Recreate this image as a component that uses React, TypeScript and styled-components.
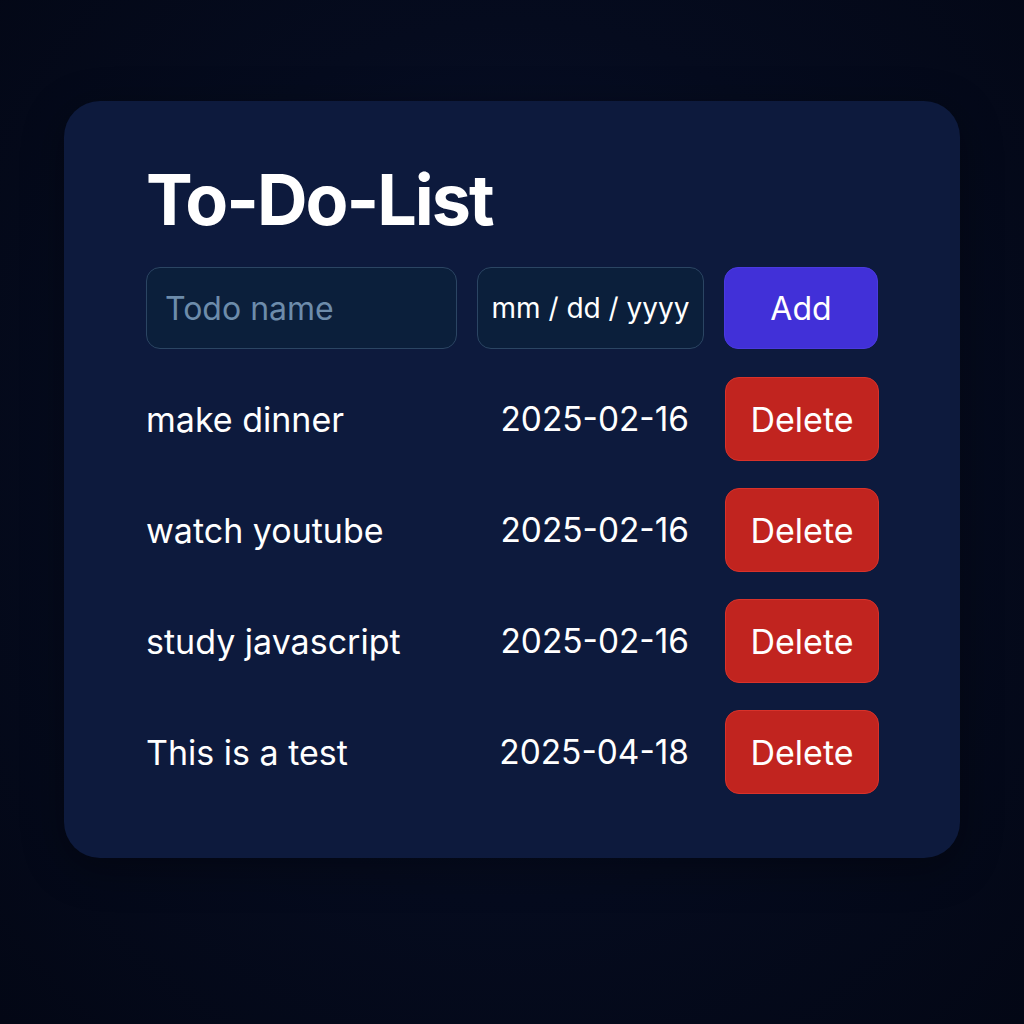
import React from "react";
import styled, { createGlobalStyle } from "styled-components";

const Global = createGlobalStyle`
  html, body { margin: 0; padding: 0; }
  body {
    background: #040919;
    font-family: Inter, "Noto Sans", "Liberation Sans", sans-serif;
    color: #ffffff;
  }
`;

const Page = styled.div`
  width: 1024px;
  height: 1024px;
  box-sizing: border-box;
  padding-top: 101px;
  padding-left: 64px;
  background: radial-gradient(ellipse at 50% 45%, #0a1330 0%, #050b1e 55%, #030715 100%);
`;

const Card = styled.div`
  width: 896px;
  height: 757px;
  box-sizing: border-box;
  background: #0d1a3d;
  border-radius: 36px;
  padding: 64px 81px 0 82px;
  box-shadow: 0 10px 40px rgba(0, 0, 0, 0.35);
`;

const Title = styled.h1`
  margin: 0 0 32px 0;
  font-size: 70px;
  font-weight: 700;
  letter-spacing: -2px;
  line-height: 70px;
  height: 70px;
  color: #ffffff;
`;

const InputRow = styled.div`
  display: grid;
  grid-template-columns: 311px 227px 154px;
  column-gap: 20px;
  height: 82px;
`;

const Field = styled.div<{ $center?: boolean }>`
  box-sizing: border-box;
  height: 82px;
  border: 1.5px solid #2b4563;
  border-radius: 14px;
  background: #0b1f3b;
  display: flex;
  align-items: center;
  justify-content: ${(p) => (p.$center ? "center" : "flex-start")};
  padding: 0 ${(p) => (p.$center ? "8px" : "18px")};
  font-size: ${(p) => (p.$center ? "28px" : "32px")};
  white-space: nowrap;
  color: ${(p) => (p.$center ? "#ffffff" : "#6d8cab")};
`;

const Button = styled.button<{ $variant: "add" | "delete" }>`
  box-sizing: border-box;
  height: ${(p) => (p.$variant === "add" ? "82px" : "84px")};
  width: 154px;
  border-radius: 14px;
  border: 1.5px solid ${(p) => (p.$variant === "add" ? "#4a3ae0" : "#d8322a")};
  background: ${(p) => (p.$variant === "add" ? "#4130d8" : "#c1241f")};
  color: #ffffff;
  font-family: inherit;
  font-size: ${(p) => (p.$variant === "add" ? "32px" : "34px")};
  font-weight: 400;
  padding: 0;
`;

const List = styled.div`
  margin-top: 28px;
  display: flex;
  flex-direction: column;
  gap: 27px;
`;

const Row = styled.div`
  display: grid;
  grid-template-columns: 1fr auto 154px;
  column-gap: 36px;
  align-items: center;
  height: 84px;
`;

const Name = styled.span`
  font-size: 34px;
  color: #ffffff;
`;

const DateText = styled.span`
  font-size: 33.4px;
  color: #ffffff;
`;

const todos = [
  { name: "make dinner", date: "2025-02-16" },
  { name: "watch youtube", date: "2025-02-16" },
  { name: "study javascript", date: "2025-02-16" },
  { name: "This is a test", date: "2025-04-18" },
];

export default function App() {
  return (
    <Page>
      <Global />
      <Card>
        <Title>To-Do-List</Title>
        <InputRow>
          <Field>Todo name</Field>
          <Field $center>mm / dd / yyyy</Field>
          <Button $variant="add">Add</Button>
        </InputRow>
        <List>
          {todos.map((t) => (
            <Row key={t.name}>
              <Name>{t.name}</Name>
              <DateText>{t.date}</DateText>
              <Button $variant="delete">Delete</Button>
            </Row>
          ))}
        </List>
      </Card>
    </Page>
  );
}
